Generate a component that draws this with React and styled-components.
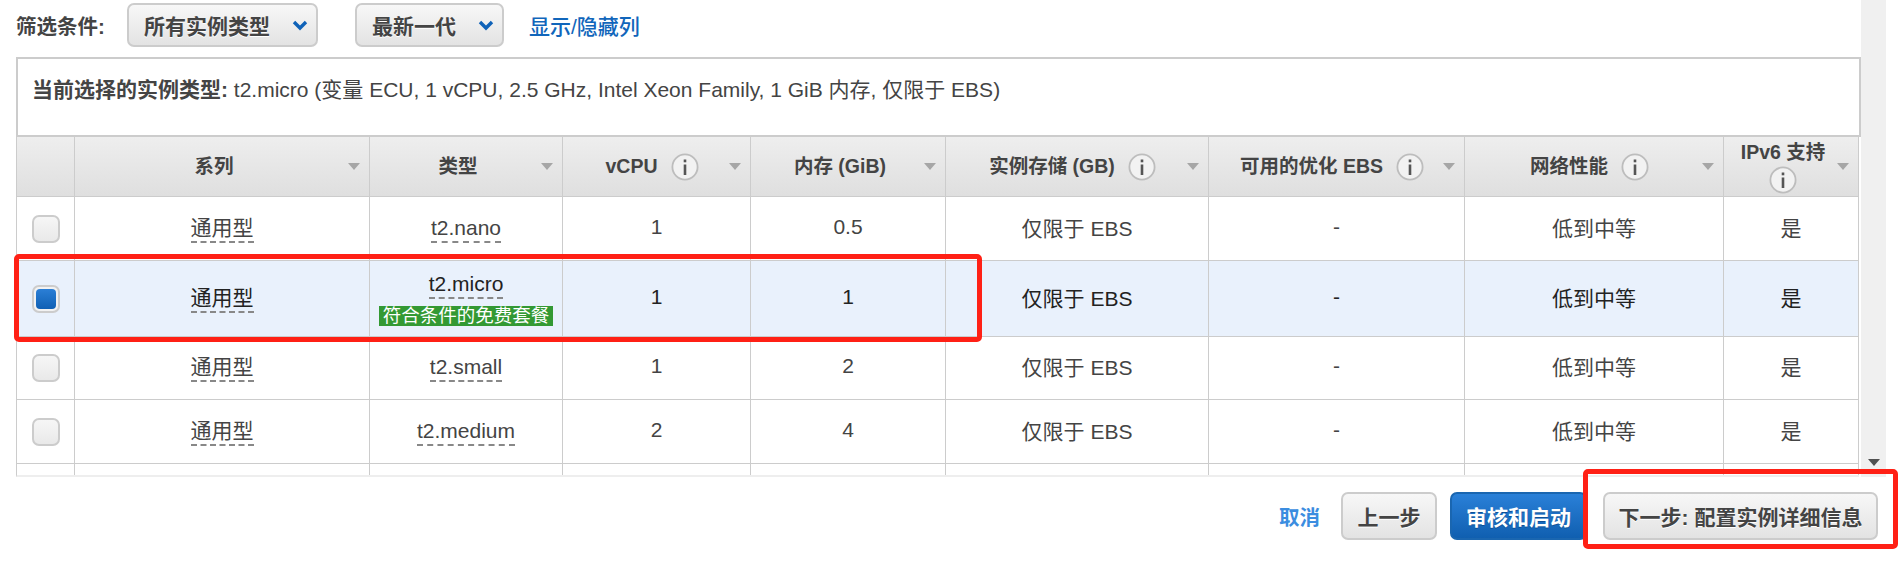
import styled, { createGlobalStyle } from "styled-components";

const GlobalStyle = createGlobalStyle`
  html, body {
    margin: 0;
    background: #fff;
    overflow: hidden;
  }
  body {
    font-family: "Liberation Sans", "Noto Sans CJK SC", sans-serif;
    color: #444;
  }
`;

const COLUMNS = "58px 295px 193px 188px 195px 263px 256px 259px 135px";

const Page = styled.div`
  position: relative;
  width: 1899px;
  height: 562px;
  overflow: hidden;
`;

const Upper = styled.div`
  display: flex;
  height: 477px;
  padding-left: 16px;
`;

const Content = styled.div`
  width: 1845px;
  flex: none;
`;

const Track = styled.div`
  width: 25px;
  flex: none;
  background: #f0f0f0;
  display: flex;
  flex-direction: column;
  justify-content: flex-end;
  align-items: center;
  padding-bottom: 11px;
  box-sizing: border-box;
`;

const ScrollArrow = styled.div`
  width: 0;
  height: 0;
  border-left: 6px solid transparent;
  border-right: 6px solid transparent;
  border-top: 7px solid #505050;
`;

const FilterBar = styled.div`
  height: 57px;
  display: flex;
  align-items: center;
  padding-bottom: 7px;
  box-sizing: border-box;
`;

const FilterLabel = styled.span`
  font-size: 20.5px;
  font-weight: 700;
  color: #444;
  width: 111px;
  flex: none;
`;

const Select = styled.div`
  width: ${(props) => props.$width}px;
  height: 44px;
  margin-right: ${(props) => props.$gap}px;
  flex: none;
  box-sizing: border-box;
  display: flex;
  align-items: center;
  justify-content: space-between;
  padding: 0 8px 0 15px;
  border: 2px solid #ccc;
  border-radius: 7px;
  background: linear-gradient(#f7f7f7, #e3e3e3);
  font-size: 21px;
  font-weight: 700;
  color: #444;
  text-shadow: 0 1px 0 #fff;
`;

const ShowHide = styled.a`
  font-size: 21px;
  font-weight: 500;
  color: #1166bb;
`;

const InfoBox = styled.div`
  height: 80px;
  box-sizing: border-box;
  border: 2px solid #ccc;
  padding: 18px 14px;
  font-size: 21px;
  line-height: 26px;
  color: #444;
  background: #fff;
`;

const Strong = styled.b`
  font-weight: 700;
`;

const TableWrap = styled.div`
  width: 1843px;
  height: 340px;
  overflow: hidden;
  border-left: 1px solid #ccc;
  border-bottom: 2px solid #eee;
  box-sizing: border-box;
`;

const Row = styled.div`
  display: grid;
  grid-template-columns: ${COLUMNS};
  height: ${(props) => props.$height}px;
  background: ${(props) => (props.$selected ? "#e9f1fc" : "#fff")};
  color: ${(props) => (props.$selected ? "#222" : "#444")};
  border-bottom: 1px solid #ccc;
  box-sizing: border-box;
`;

const HeaderRow = styled(Row)`
  background: linear-gradient(#eeeeee, #dfdfdf);
  color: #444;
`;

const Cell = styled.div`
  border-right: 1px solid #ccc;
  display: flex;
  flex-direction: column;
  align-items: center;
  justify-content: center;
  font-size: 21px;
  min-width: 0;
`;

/* plain values sit a little above the middle of the row */
const TextCell = styled(Cell)`
  padding-bottom: 4px;
  box-sizing: border-box;
`;

const HeaderCell = styled.div`
  position: relative;
  border-right: 1px solid #ccc;
  display: flex;
  flex-wrap: wrap;
  align-items: center;
  justify-content: center;
  align-content: center;
  column-gap: 13px;
  padding-right: ${(props) => (props.$tight ? 9 : 16)}px;
  box-sizing: border-box;
  font-size: 19.5px;
  font-weight: 700;
  line-height: 27px;
`;

const SortArrow = styled.span`
  position: absolute;
  right: 9px;
  top: 50%;
  margin-top: -4px;
  width: 0;
  height: 0;
  border-left: 6px solid transparent;
  border-right: 6px solid transparent;
  border-top: 7px solid #a6a6a6;
`;

const Dashed = styled.span`
  display: inline-block;
  line-height: 26px;
  border-bottom: 2px dashed #888;
`;

const Badge = styled.span`
  display: block;
  width: 174px;
  height: 20px;
  margin-top: 7px;
  background: #339933;
  color: #fff;
  font-size: 18.5px;
  line-height: 20px;
  text-align: center;
  white-space: nowrap;
`;

const Check = styled.div`
  width: 28px;
  height: 28px;
  box-sizing: border-box;
  border: 2px solid #ccc;
  border-radius: 7px;
  background: ${(props) =>
    props.$checked ? "#f2f2f2" : "linear-gradient(#f6f6f6, #e9e9e9)"};
  display: flex;
  align-items: center;
  justify-content: center;
`;

const CheckFill = styled.div`
  width: 20px;
  height: 20px;
  border-radius: 4px;
  background: linear-gradient(#2b7fd6, #1060b4);
`;

const Footer = styled.div`
  display: flex;
  justify-content: flex-end;
  align-items: center;
  height: 48px;
  margin-top: 15px;
  padding-right: 21px;
`;

const CancelLink = styled.a`
  font-size: 20.5px;
  font-weight: 700;
  color: #3b8de0;
  margin-right: 21px;
`;

const Button = styled.div`
  width: ${(props) => props.$width}px;
  height: 48px;
  margin-right: ${(props) => props.$gap || 0}px;
  box-sizing: border-box;
  display: flex;
  align-items: center;
  justify-content: center;
  border: 2px solid ${(props) => (props.$primary ? "#1a66b0" : "#ccc")};
  border-radius: 7px;
  background: ${(props) =>
    props.$primary
      ? "linear-gradient(#2a80d8, #105fb0)"
      : "linear-gradient(#f7f7f7, #e3e3e3)"};
  color: ${(props) => (props.$primary ? "#fff" : "#444")};
  font-size: 21px;
  font-weight: 700;
  white-space: nowrap;
  text-shadow: ${(props) =>
    props.$primary ? "0 1px 0 #0d4f96" : "0 1px 0 #fff"};
`;

const Highlight = styled.div`
  position: absolute;
  left: ${(props) => props.$left}px;
  top: ${(props) => props.$top}px;
  width: ${(props) => props.$width}px;
  height: ${(props) => props.$height}px;
  box-sizing: border-box;
  border: 5px solid #ff2015;
  border-radius: 5px;
  pointer-events: none;
`;

function Chevron() {
  return (
    <svg width="16" height="12" viewBox="0 0 16 12">
      <path d="M2 3 L8 9 L14 3" fill="none" stroke="#0f62b8" strokeWidth="3.4" />
    </svg>
  );
}

function InfoIcon() {
  return (
    <svg width="28" height="28" viewBox="0 0 28 28">
      <circle cx="14" cy="14" r="12.6" fill="#f2f2f2" stroke="#bdbdbd" strokeWidth="1.8" />
      <rect x="12.7" y="11.5" width="2.6" height="10.5" fill="#555" />
      <rect x="12.7" y="6.5" width="2.6" height="2.8" fill="#555" />
    </svg>
  );
}

const headers = [
  { label: "系列" },
  { label: "类型" },
  { label: "vCPU", info: true, tight: true },
  { label: "内存 (GiB)" },
  { label: "实例存储 (GB)", info: true, tight: true },
  { label: "可用的优化 EBS", info: true, tight: true },
  { label: "网络性能", info: true, tight: true },
  { label: "IPv6 支持", info: true },
];

const rows = [
  { type: "t2.nano", cpu: "1", mem: "0.5", height: 64 },
  { type: "t2.micro", cpu: "1", mem: "1", height: 76, selected: true },
  { type: "t2.small", cpu: "1", mem: "2", height: 63 },
  { type: "t2.medium", cpu: "2", mem: "4", height: 64 },
  { type: "", cpu: "", mem: "", height: 64, empty: true },
];

export default function App() {
  return (
    <Page>
      <GlobalStyle />
      <Upper>
        <Content>
          <FilterBar>
            <FilterLabel>筛选条件:</FilterLabel>
            <Select $width={191} $gap={37}>
              所有实例类型
              <Chevron />
            </Select>
            <Select $width={149} $gap={25}>
              最新一代
              <Chevron />
            </Select>
            <ShowHide>显示/隐藏列</ShowHide>
          </FilterBar>
          <InfoBox>
            <Strong>当前选择的实例类型:</Strong> t2.micro (变量 ECU, 1 vCPU, 2.5 GHz,
            Intel Xeon Family, 1 GiB 内存, 仅限于 EBS)
          </InfoBox>
          <TableWrap>
            <HeaderRow $height={60}>
              <Cell />
              {headers.map((h) => (
                <HeaderCell key={h.label} $tight={h.tight}>
                  <span>{h.label}</span>
                  {h.info && <InfoIcon />}
                  <SortArrow />
                </HeaderCell>
              ))}
            </HeaderRow>
            {rows.map((r, i) => (
              <Row key={i} $height={r.height} $selected={r.selected}>
                <Cell>
                  {!r.empty && (
                    <Check $checked={r.selected}>{r.selected && <CheckFill />}</Check>
                  )}
                </Cell>
                <Cell>{!r.empty && <Dashed>通用型</Dashed>}</Cell>
                <Cell>
                  {!r.empty && <Dashed>{r.type}</Dashed>}
                  {r.selected && <Badge>符合条件的免费套餐</Badge>}
                </Cell>
                <TextCell>{r.cpu}</TextCell>
                <TextCell>{r.mem}</TextCell>
                <TextCell>{!r.empty && "仅限于 EBS"}</TextCell>
                <TextCell>{!r.empty && "-"}</TextCell>
                <TextCell>{!r.empty && "低到中等"}</TextCell>
                <TextCell>{!r.empty && "是"}</TextCell>
              </Row>
            ))}
          </TableWrap>
        </Content>
        <Track>
          <ScrollArrow />
        </Track>
      </Upper>
      <Footer>
        <CancelLink>取消</CancelLink>
        <Button $width={96} $gap={13}>
          上一步
        </Button>
        <Button $width={137} $gap={16} $primary>
          审核和启动
        </Button>
        <Button $width={275}>下一步: 配置实例详细信息</Button>
      </Footer>
      <Highlight $left={14} $top={254} $width={968} $height={88} />
      <Highlight $left={1583} $top={469} $width={315} $height={80} />
    </Page>
  );
}
